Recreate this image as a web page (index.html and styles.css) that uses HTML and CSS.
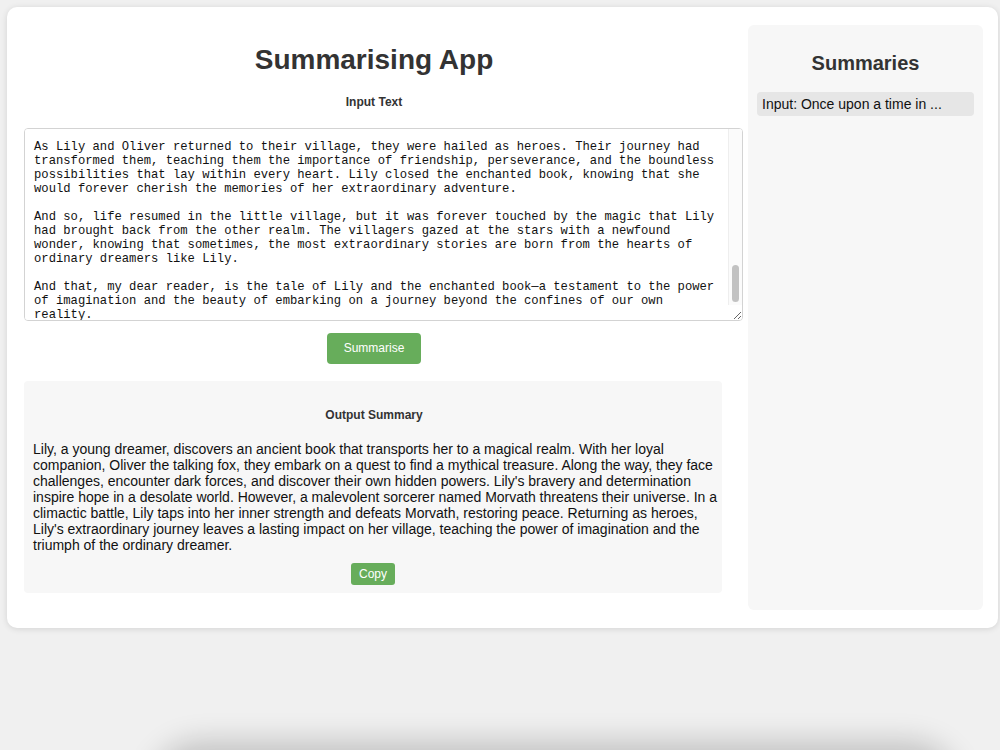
FILE: index.html
```html
<!DOCTYPE html>
<html lang="en">
<head>
<meta charset="utf-8">
<title>Summarising App</title>
<link rel="stylesheet" href="styles.css">
</head>
<body>
<div class="card">
  <main class="main">
    <h1 class="title">Summarising App</h1>
    <h3 class="label">Input Text</h3>
    <div class="input-wrap">
      <textarea class="input" id="input-text" spellcheck="false">Once upon a time in a quiet little village nestled between rolling hills and whispering forests, there lived a young girl named Lily. She was an ordinary girl with an extraordinary imagination, and she spent her days dreaming of faraway lands and daring adventures.

One rainy afternoon, while exploring the dusty attic of her grandmother's cottage, Lily stumbled upon an ancient book bound in faded leather. Its pages shimmered with golden letters that seemed to dance beneath her fingertips. As she opened it, a gust of wind swept through the attic, and the world around her dissolved into light.

When Lily opened her eyes, she found herself in a magical realm filled with towering trees, glowing flowers, and rivers that sparkled like diamonds. Standing before her was a small red fox with bright, curious eyes. "Welcome, traveller," he said. "My name is Oliver, and I have been waiting for you."

Oliver explained that the realm was in grave danger. A mythical treasure, the Heart of Eldoria, had been hidden long ago to protect the land from darkness. Only someone with a pure and imaginative heart could find it. Lily, though unsure of herself, agreed to help.

Together, Lily and Oliver embarked on a quest across enchanted forests, misty mountains, and forgotten ruins. Along the way, they faced many challenges: riddles carved into ancient stones, bridges that vanished beneath their feet, and shadowy creatures that lurked in the dark.

With every trial, Lily discovered hidden powers within herself. Her courage grew stronger, and her kindness brought light to those they met. The people of the realm, who had long lost hope, began to believe again as word of the brave girl and her loyal fox spread.

But a malevolent sorcerer named Morvath had been watching them. He sought the Heart of Eldoria for himself, wishing to plunge the realm into eternal night. He sent storms and nightmares to stop them, yet Lily and Oliver pressed on, never losing faith in each other.

At last, they reached the Crystal Caverns, where the treasure lay. There, Morvath appeared in a swirl of black smoke. A fierce battle followed, and just when all seemed lost, Lily looked deep inside her heart and found the strength of every dream she had ever dreamed. With a burst of radiant light, she defeated Morvath, and peace returned to the realm.

As Lily and Oliver returned to their village, they were hailed as heroes. Their journey had transformed them, teaching them the importance of friendship, perseverance, and the boundless possibilities that lay within every heart. Lily closed the enchanted book, knowing that she would forever cherish the memories of her extraordinary adventure.

And so, life resumed in the little village, but it was forever touched by the magic that Lily had brought back from the other realm. The villagers gazed at the stars with a newfound wonder, knowing that sometimes, the most extraordinary stories are born from the hearts of ordinary dreamers like Lily.

And that, my dear reader, is the tale of Lily and the enchanted book—a testament to the power of imagination and the beauty of embarking on a journey beyond the confines of our own reality.</textarea>
      <div class="scroll-track"><div class="scroll-thumb"></div></div>
    </div>
    <button class="btn btn-summarise" type="button">Summarise</button>
    <section class="output">
      <h3 class="label output-label">Output Summary</h3>
      <p class="summary">Lily, a young dreamer, discovers an ancient book that transports her to a magical realm. With her loyal companion, Oliver the talking fox, they embark on a quest to find a mythical treasure. Along the way, they face challenges, encounter dark forces, and discover their own hidden powers. Lily's bravery and determination inspire hope in a desolate world. However, a malevolent sorcerer named Morvath threatens their universe. In a climactic battle, Lily taps into her inner strength and defeats Morvath, restoring peace. Returning as heroes, Lily's extraordinary journey leaves a lasting impact on her village, teaching the power of imagination and the triumph of the ordinary dreamer.</p>
      <button class="btn btn-copy" type="button">Copy</button>
    </section>
  </main>
  <aside class="sidebar">
    <h2 class="sidebar-title">Summaries</h2>
    <ul class="history">
      <li class="history-item">Input: Once upon a time in ...</li>
    </ul>
  </aside>
</div>
<div class="dock-shadow"></div>
<script src="script.js"></script>
</body>
</html>
```

FILE: styles.css
```css
html, body {
  margin: 0;
  padding: 0;
}

body {
  background: #f0f0f0;
  font-family: "Liberation Sans", Arial, Helvetica, sans-serif;
  color: #333;
  height: 750px;
  overflow: hidden;
}

.card {
  box-sizing: border-box;
  width: 991px;
  margin: 7px 0 0 7px;
  padding: 18px 15px 18px 17px;
  background: #fff;
  border-radius: 10px;
  box-shadow: 0 1px 6px rgba(0, 0, 0, 0.12);
  display: grid;
  grid-template-columns: 698px 235px;
  column-gap: 26px;
  align-items: start;
}

.main {
  display: flex;
  flex-direction: column;
  align-items: center;
}

.title {
  margin: 19px 0 0 2px;
  font-size: 28px;
  line-height: 32px;
  font-weight: bold;
  color: #333;
}

.label {
  margin: 19px 0 0 2px;
  font-size: 12px;
  line-height: 14px;
  font-weight: bold;
  color: #333;
}

/* textarea plus its slim scroll indicator */
.input-wrap {
  position: relative;
  align-self: flex-start;
  width: 719px;
  margin-top: 19px;
}

.input {
  display: block;
  box-sizing: border-box;
  width: 100%;
  height: 193px;
  margin: 0;
  padding: 10px 23px 10px 9px;
  border: 1px solid #d3d3d3;
  border-radius: 4px;
  font-family: "Liberation Mono", "Courier New", monospace;
  font-size: 12.2px;
  line-height: 14px;
  color: #111;
  background: #fff;
  resize: vertical;
  outline: none;
  scrollbar-width: none;
}

.scroll-track {
  position: absolute;
  top: 1px;
  right: 1px;
  bottom: 16px;
  width: 13px;
  background: #fbfbfb;
  border-left: 1px solid #eeeeee;
  border-top-right-radius: 3px;
}

.scroll-thumb {
  position: absolute;
  left: 3px;
  top: 136px;
  width: 7px;
  height: 37px;
  border-radius: 4px;
  background: #c2c2c2;
}

.btn {
  border: none;
  color: #fff;
  background: #67ad5b;
  font-family: "Liberation Sans", Arial, Helvetica, sans-serif;
  font-size: 12px;
  cursor: pointer;
}

.btn-summarise {
  margin: 12px 0 0 2px;
  padding: 8px 17px;
  line-height: 15px;
  border-radius: 4px;
}

.output {
  box-sizing: border-box;
  align-self: stretch;
  margin-top: 17px;
  padding: 0 9px 8px;
  background: #f7f7f7;
  border-radius: 4px;
  display: flex;
  flex-direction: column;
  align-items: center;
}

.output-label {
  margin-top: 27px;
}

.summary {
  align-self: stretch;
  margin: 19px -5px 0 0;
  font-size: 14px;
  line-height: 16px;
  color: #111;
}

.btn-copy {
  margin-top: 10px;
  padding: 4px 8px;
  line-height: 14px;
  border-radius: 3px;
}

.sidebar {
  box-sizing: border-box;
  height: 585px;
  padding: 27px 9px 0;
  background: #f7f7f7;
  border-radius: 6px;
}

.sidebar-title {
  margin: 0;
  text-align: center;
  font-size: 20px;
  line-height: 23px;
  font-weight: bold;
  color: #333;
}

.history {
  list-style: none;
  margin: 17px 0 0;
  padding: 0;
}

.history-item {
  padding: 4px 5px;
  font-size: 14px;
  line-height: 16px;
  color: #111;
  background: #e6e6e6;
  border-radius: 4px;
}

/* soft shadow cast by the dock peeking in at the bottom edge */
.dock-shadow {
  position: fixed;
  left: 170px;
  top: 760px;
  width: 770px;
  height: 60px;
  border-radius: 30px;
  background: #b8b8b8;
  box-shadow: 0 0 30px 18px rgba(0, 0, 0, 0.2);
}
```

FILE: script.js
```js
// Keep the end of the pasted story in view inside the input box.
const input = document.getElementById('input-text');
input.scrollTop = input.scrollHeight - input.clientHeight - 12;
```
